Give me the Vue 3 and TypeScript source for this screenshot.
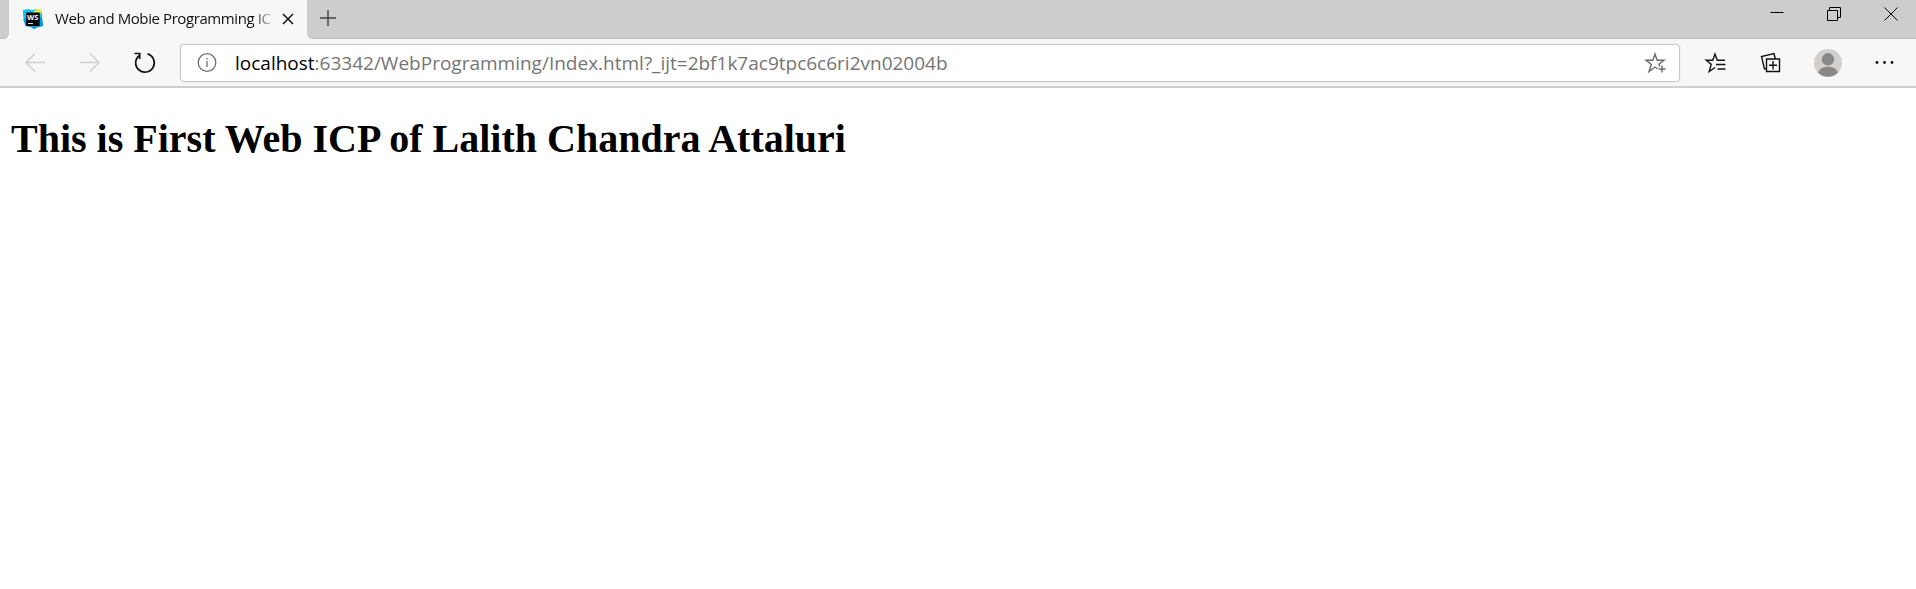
<script setup lang="ts">
import { ref } from 'vue'

const tabTitle = ref('Web and Mobie Programming IC')
const host = ref('localhost')
const path = ref(':63342/WebProgramming/Index.html?_ijt=2bf1k7ac9tpc6c6ri2vn02004b')
const heading = ref('This is First Web ICP of Lalith Chandra Attaluri')
</script>

<template>
  <div class="browser">
    <header class="tabstrip">
      <div class="strip-start"></div>
      <div class="tab">
        <svg class="favicon" width="20" height="20" viewBox="0 0 20 20">
          <path d="M0 1 5 0l4 1 6-1 4 3v6l1 8-5 1-4 2-3-2-6-1-1-6L0 6z" fill="#12c4f2" />
          <path d="M0 10l3 7 5 1 3 2 4-2 5-1-1-9z" fill="#0796e5" />
          <path d="M9 4 14 0h4l.5 4-2 1z" fill="#e0ee4a" />
          <rect x="3.200" y="3.500" width="13.500" height="13.500" fill="#050505" />
          <text x="4" y="10.500" class="favicon-text" textLength="11.500">WS</text>
          <path d="M5 14.500h5" stroke="#ddd" stroke-width="1" />
        </svg>
        <span class="tab-title">{{ tabTitle }}</span>
        <svg class="tab-close" width="12" height="12" viewBox="0 0 12 12"><path d="M1 1l10 10M11 1L1 11" /></svg>
      </div>
      <div class="strip-rest">
        <svg class="plus" width="18" height="18" viewBox="0 0 18 18"><path d="M9 1v16M1 9h16" /></svg>
        <div class="window-controls">
          <svg width="14" height="14" viewBox="0 0 14 14"><path d="M.5 6.500h13" /></svg>
          <svg width="14" height="14" viewBox="0 0 14 14"><path d="M.5 3.500h10v10h-10zM2.500 3.500v-3h11v10h-3" /></svg>
          <svg width="14" height="14" viewBox="0 0 14 14"><path d="M.5 .5l13 13M13.500 .5l-13 13" /></svg>
        </div>
      </div>
    </header>
    <nav class="toolbar">
      <div class="nav-buttons">
        <svg class="icon disabled" viewBox="0 0 28 28"><path d="M24 13.500H5M14 4.500l-9 9 9 9" /></svg>
        <svg class="icon disabled" viewBox="0 0 28 28"><path d="M4 13.500h19M14 4.500l9 9-9 9" /></svg>
        <svg class="icon reload" viewBox="0 0 28 28"><path d="M16.500 4.900A9.300 9.300 0 1 1 8.700 6.200M3.500 4.500H8.700V10" /></svg>
      </div>
      <div class="address">
        <svg class="info" width="20" height="20" viewBox="0 0 20 20">
          <circle cx="10" cy="9.500" r="8.800" /><path d="M10 8v6M10 5v1.600" />
        </svg>
        <span class="url"><span class="host">{{ host }}</span>{{ path }}</span>
        <svg class="add-star" viewBox="0 0 28 28">
          <path d="M15.500 19.800 13 18 7 22.500l2.300-7L4 11.300h6.800L13 5l2.200 6.300H22l-5 4 .8 2.200M20 16.500v7M16.500 20h7" />
        </svg>
      </div>
      <div class="actions">
        <svg class="icon" viewBox="0 0 28 28"><path d="M13 18.500 7.200 22.500l2-7.200-5-4h6.600L13 5l2.300 6.200H23M14 15.500h9.500M15.500 20h8" /></svg>
        <svg class="icon collections" viewBox="0 0 28 28"><path d="M9.500 10h13v12.500h-13zM16 12v8.500M12 16.250h8M9.500 19.500 7.500 20 4.500 7.500 17 4.500l1.200 5" /></svg>
        <svg class="avatar" viewBox="0 0 28 28">
          <circle cx="14" cy="14" r="14" fill="#d2d0ce" />
          <circle cx="14" cy="10.300" r="6.200" fill="#8a8886" />
          <path d="M4.200 23.800c1-4 5-6 9.800-6s8.800 2 9.800 6A14 14 0 0 1 4.200 23.800z" fill="#8a8886" />
        </svg>
        <svg class="icon dots" viewBox="0 0 28 28"><circle cx="7" cy="13.500" r="1.400" /><circle cx="14.500" cy="13.500" r="1.400" /><circle cx="22" cy="13.500" r="1.400" /></svg>
      </div>
    </nav>
    <main class="page"><h1>{{ heading }}</h1></main>
  </div>
</template>

<style>
body { background: #fff; }
</style>

<style scoped>
.browser { height: 589px; overflow: hidden; background: #fff; }
svg { display: block; flex: none; }
.tabstrip { height: 39px; display: flex; background: #f7f7f7; }
.strip-start { width: 9px; box-sizing: border-box; background: #cdcdcd; border-radius: 0 0 6px 0; border-bottom: 1px solid #bcbcbc; }
.tab { width: 298px; box-sizing: border-box; display: flex; align-items: center; padding: 0 12px 1px 14px; background: #f7f7f7; }
.favicon-text { font: bold 7.500px "Open Sans", sans-serif; fill: #fff; }
.tab-title { width: 219px; margin-left: 12px; margin-right: 8px; padding-bottom: 2px; white-space: nowrap; font: 15px/24px "Open Sans", sans-serif; color: #111; letter-spacing: -0.41px; -webkit-mask-image: linear-gradient(90deg, #000 198px, transparent 221px); mask-image: linear-gradient(90deg, #000 198px, transparent 221px); }
.tab-close { stroke: #111; stroke-width: 1.500; fill: none; }
.strip-rest { flex: 1; box-sizing: border-box; display: flex; justify-content: space-between; background: #cdcdcd; border-radius: 0 0 0 6px; border-bottom: 1px solid #bcbcbc; padding: 0 18px 0 12px; }
.plus { stroke: #444; stroke-width: 1.400; margin-top: 9px; fill: none; }
.window-controls { display: flex; gap: 43px; padding-top: 7px; }
.window-controls svg { fill: none; stroke: #000; stroke-width: 1; }
.window-controls svg:first-child { margin-top: -1px; }
.toolbar { height: 49px; box-sizing: border-box; border-bottom: 2px solid #cecece; background: #f7f7f7; display: flex; align-items: center; }
.nav-buttons { display: flex; gap: 27px; padding-left: 21px; width: 138px; }
.icon { width: 28px; height: 28px; fill: none; stroke: #111; stroke-width: 1.400; }
.disabled { stroke: #cfcfcf; }
.reload { stroke-width: 1.700; }
.address { width: 1500px; height: 38px; margin-left: 21px; box-sizing: border-box; display: flex; align-items: center; background: #fff; border: 1px solid #c8c8c8; border-radius: 4px; box-shadow: 0 0 2px #ddd; padding: 0 15px 0 16px; }
.info { fill: none; stroke: #6e6e6e; stroke-width: 1.300; }
.url { margin-left: 18px; flex: 1; font: 19px/28px "Open Sans", sans-serif; color: #757575; white-space: nowrap; }
.host { color: #000; }
.add-star { width: 28px; height: 28px; margin-right: -6px; fill: none; stroke: #6b6b6b; stroke-width: 1.400; }
.actions { display: flex; align-items: center; margin-left: 22px; gap: 28px; }
.collections { margin-left: -1px; margin-right: 1px; }
.avatar { width: 28px; height: 28px; }
.dots { fill: #111; stroke: none; }
.page { padding: 0 11px; }
h1 { margin: 28px 0 0; font: bold 40px/46px "Liberation Serif", "Times New Roman", serif; color: #000; white-space: nowrap; }
</style>
